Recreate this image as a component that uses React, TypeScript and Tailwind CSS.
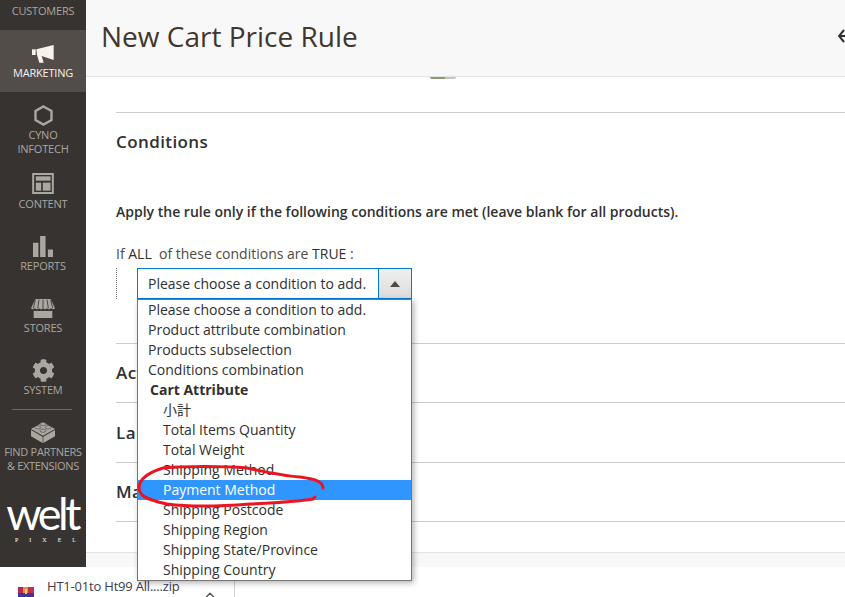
import React from "react";
import { FaCog } from "react-icons/fa";
import { ChevronUp } from "lucide-react";

const MegaphoneIcon = () => (
  <svg width="22" height="18" viewBox="0 0 66 54" fill="#f7f3eb">
    <rect x="0" y="13" width="11" height="17" />
    <path d="M13 13 65 0V45L29 33 35 53H22L15 30Z" />
  </svg>
);

const HexIcon = () => (
  <svg width="19" height="21" viewBox="0 0 19 21" fill="none" stroke="#aaa6a0" strokeWidth="2.4">
    <path d="M9.5 1.5 17.5 6V15L9.5 19.5 1.5 15V6Z" />
  </svg>
);

const LayoutIcon = () => (
  <svg width="22" height="21" viewBox="0 0 65 63" fill="#aaa6a0">
    <path fillRule="evenodd" d="M0 0H65V63H0ZM6 6V57H59V6Z" />
    <rect x="11" y="10" width="44" height="13" />
    <rect x="11" y="29" width="16" height="24" />
    <rect x="32" y="29" width="23" height="24" />
  </svg>
);

const BarsIcon = () => (
  <svg width="20" height="21" viewBox="0 0 59 62" fill="#aaa6a0">
    <rect x="0" y="20" width="16" height="42" />
    <rect x="21" y="0" width="16" height="62" />
    <rect x="44" y="40" width="15" height="22" />
  </svg>
);

const StoreIcon = () => (
  <svg width="24" height="19" viewBox="0 0 72 57" fill="#aaa6a0">
    <path d="M13 0H59L72 28Q66 34 60 28 54 34 48 28 42 34 36 28 30 34 24 28 18 34 12 28 6 34 0 28Z" />
    <path d="M24 2 20 28M36 2V28M48 2 52 28M13 2 7 28M59 2 65 28" stroke="#373330" strokeWidth="2.5" />
    <path d="M8 35Q12 37 18 35 24 37 30 35 36 37 42 35 48 37 54 35 60 37 64 35V57H8Z" />
  </svg>
);

const BrickIcon = () => (
  <svg width="24" height="22" viewBox="0 0 72 66" fill="#aaa6a0">
    <path d="M0 24 36 4 72 24 36 44Z" />
    <path d="M0 27 35 47V66L0 46Z" />
    <path d="M37 47 72 27V46L37 66Z" />
    <g stroke="#373330" strokeWidth="1.5">
      <ellipse cx="36" cy="9" rx="9" ry="5" />
      <ellipse cx="20" cy="19" rx="9" ry="5" />
      <ellipse cx="52" cy="19" rx="9" ry="5" />
      <ellipse cx="36" cy="29" rx="9" ry="5" />
    </g>
  </svg>
);

const ArchiveIcon = () => (
  <svg width="16" height="10" viewBox="0 0 16 10">
    <rect x="0" y="0" width="5" height="10" fill="#b32a5a" />
    <rect x="5" y="0" width="5" height="10" fill="#e8912d" />
    <rect x="10" y="0" width="6" height="10" fill="#c7304a" />
    <rect x="0" y="6" width="16" height="4" fill="#43339a" />
    <rect x="7" y="2" width="2" height="5" fill="#f0d060" />
  </svg>
);

function NavItem({
  icon,
  label,
  active,
  height,
  iconTop,
  labelTop,
}: {
  icon: React.ReactNode;
  label: string[];
  active?: boolean;
  height: string;
  iconTop: string;
  labelTop: string;
}) {
  return (
    <div className={`flex flex-col items-center ${height} ${active ? "bg-[#524d49] text-[#f7f3eb]" : "text-[#aaa6a0]"}`}>
      <div className={`flex h-[24px] items-center justify-center ${iconTop} ${labelTop}`}>{icon}</div>
      {label.map((line) => (
        <span key={line} className="text-[11px] leading-[14px] whitespace-nowrap tracking-[-0.2px]">
          {line}
        </span>
      ))}
    </div>
  );
}

function Sidebar() {
  return (
    <div className="flex w-[86px] shrink-0 flex-col bg-[#373330]">
      <div className="h-[30px] pt-[4px] text-center text-[11px] leading-[14px] tracking-[-0.2px] text-[#aaa6a0]">CUSTOMERS</div>
      <NavItem icon={<MegaphoneIcon />} label={["MARKETING"]} active height="h-[62px]" iconTop="mt-[12px]" labelTop="mb-0" />
      <NavItem icon={<HexIcon />} label={["CYNO", "INFOTECH"]} height="h-[68px]" iconTop="mt-[11px]" labelTop="mb-[1px]" />
      <NavItem icon={<LayoutIcon />} label={["CONTENT"]} height="h-[62px]" iconTop="mt-[11px]" labelTop="mb-[2px]" />
      <NavItem icon={<BarsIcon />} label={["REPORTS"]} height="h-[62px]" iconTop="mt-[12px]" labelTop="mb-[1px]" />
      <NavItem icon={<StoreIcon />} label={["STORES"]} height="h-[62px]" iconTop="mt-[12px]" labelTop="mb-[1px]" />
      <NavItem icon={<FaCog size={23} color="#aaa6a0" />} label={["SYSTEM"]} height="h-[62px]" iconTop="mt-[12px]" labelTop="mb-[1px]" />
      <div className="mx-[12px] mt-[1px] h-px w-[60px] bg-[#6f6a65]" />
      <div className="flex flex-col items-center text-[#aaa6a0]">
        <div className="mt-[10px] flex h-[24px] items-center justify-center">
          <BrickIcon />
        </div>
        <span className="mt-[1px] text-[11px] leading-[14px] whitespace-nowrap tracking-[-0.3px]">FIND PARTNERS</span>
        <span className="text-[11px] leading-[14px] whitespace-nowrap tracking-[-0.3px]">&amp; EXTENSIONS</span>
      </div>
      <div className="mt-[22px] flex flex-col items-center text-white">
        <span className="pr-[2px] font-['Lato',sans-serif] text-[45px] leading-[36px] tracking-[-3.5px]">welt</span>
        <span className="mt-[5px] pl-[16px] font-['Liberation_Serif',serif] text-[6px] leading-[8px] tracking-[11px]">PIXEL</span>
      </div>
    </div>
  );
}

const options = [
  { text: "Please choose a condition to add.", cls: "pl-[10px]" },
  { text: "Product attribute combination", cls: "pl-[10px]" },
  { text: "Products subselection", cls: "pl-[10px]" },
  { text: "Conditions combination", cls: "pl-[10px]" },
  { text: "Cart Attribute", cls: "pl-[12px] font-bold" },
  { text: "小計", cls: "pl-[25px]" },
  { text: "Total Items Quantity", cls: "pl-[25px]" },
  { text: "Total Weight", cls: "pl-[25px]" },
  { text: "Shipping Method", cls: "pl-[25px]" },
  { text: "Payment Method", cls: "pl-[25px] bg-[#2f96ff] text-white" },
  { text: "Shipping Postcode", cls: "pl-[25px]" },
  { text: "Shipping Region", cls: "pl-[25px]" },
  { text: "Shipping State/Province", cls: "pl-[25px]" },
  { text: "Shipping Country", cls: "pl-[25px]" },
];

function ConditionSelect() {
  return (
    <div className="relative ml-[20px] w-[275px]">
      <div className="flex h-[31px] w-[275px] border border-[#007bdb] bg-white">
        <div className="flex-1 pl-[10px] text-[14px] leading-[29px] text-[#303030]">Please choose a condition to add.</div>
        <div className="flex w-[33px] items-center justify-center border-l border-[#007bdb] bg-gradient-to-b from-[#f0f0f0] to-[#dcdcdc]">
          <div className="h-0 w-0 border-x-[5px] border-b-[6px] border-x-transparent border-b-[#514943]" />
        </div>
      </div>
      <div className="absolute top-[31px] left-0 z-10 w-[275px] border border-[#767676] bg-white shadow-[2px_2px_6px_rgba(0,0,0,0.3)]">
        {options.map((option) => (
          <div key={option.text} className={`h-[20px] text-[14px] leading-[20px] whitespace-nowrap text-[#303030] ${option.cls}`}>
            {option.text}
          </div>
        ))}
      </div>
    </div>
  );
}

function Section({ title, height }: { title: string; height: string }) {
  return (
    <div className={`flex items-center border-t border-[#cccccc] text-[17px] font-semibold tracking-[0.4px] text-[#303030] ${height}`}>{title}</div>
  );
}

function MainPanel() {
  return (
    <div className="flex min-w-0 flex-1 flex-col bg-white">
      <div className="flex h-[77px] shrink-0 items-center justify-between border-b border-[#e3e3e3] bg-[#f8f8f8] pb-[4px] pl-[15px]">
        <h1 className="text-[28px] leading-[36px] text-[#41362f]">New Cart Price Rule</h1>
        <svg width="7" height="14" viewBox="0 0 7 14" fill="none" stroke="#303030" strokeWidth="2">
          <path d="M6 1 1 7 6 13M1 7H7" />
        </svg>
      </div>
      <div className="ml-[344px] flex h-[2px] w-[26px] shrink-0 overflow-hidden rounded-b-full">
        <div className="w-[15px] bg-[#8a9a70]" />
        <div className="flex-1 bg-[#c4c4c4]" />
      </div>
      <div className="ml-[30px] flex-1">
        <div className="mt-[33px] h-[231px] border-t border-[#cccccc]">
          <h2 className="mt-[17px] text-[17px] leading-[24px] font-semibold tracking-[0.4px] text-[#303030]">Conditions</h2>
          <p className="mt-[48px] text-[14px] leading-[20px] font-semibold text-[#303030]">
            Apply the rule only if the following conditions are met (leave blank for all products).
          </p>
          <p className="mt-[22px] text-[14px] leading-[20px] whitespace-pre text-[#514943]">
            If <span className="text-[#303030]">ALL</span>  of these conditions are <span className="text-[#303030]">TRUE</span> :
          </p>
          <div className="mt-[4px] border-l border-dotted border-[#707070]">
            <ConditionSelect />
          </div>
        </div>
        <Section title="Actions" height="h-[59px]" />
        <Section title="Labels" height="h-[60px]" />
        <Section title="Manage Coupon Codes" height="h-[59px]" />
        <div className="h-[31px] border-t border-[#cccccc]" />
      </div>
      <div className="h-[15px] shrink-0 border-t border-[#e3e3e3] bg-[#f8f8f8]" />
    </div>
  );
}

function DownloadBar() {
  return (
    <div className="flex h-[30px] shrink-0 overflow-hidden bg-white">
      <div className="relative flex h-[30px] w-[235px] border-r border-[#cfcfcf] pl-[18px]">
        <div className="mt-[20px]">
          <ArchiveIcon />
        </div>
        <span className="mt-[9px] ml-[13px] text-[13px] leading-[20px] tracking-[-0.2px] whitespace-nowrap text-[#3c3c4e]">HT1-01to Ht99 All....zip</span>
        <ChevronUp className="mt-[21px] ml-[23px] shrink-0 text-[#555555]" size={14} strokeWidth={2.5} />
      </div>
    </div>
  );
}

export default function App() {
  return (
    <div className="relative flex h-[597px] w-[845px] flex-col overflow-hidden bg-white font-['Open_Sans','Noto_Sans_CJK_JP',sans-serif]">
      <div className="flex h-[567px] shrink-0">
        <Sidebar />
        <MainPanel />
      </div>
      <DownloadBar />
      {/* red pen circle around the highlighted option */}
      <svg className="pointer-events-none absolute top-0 left-0 z-20" width="845" height="597" fill="none">
        <path
          d="M323 488C323 481 314 479 300 477 285 476 265 472 247 468 225 466 185 466 163 468 150 472 140 478 139 487 139 495 144 499 167 504 190 507 225 506 250 504 270 503 295 502 313 499L315 497"
          stroke="#ea1520"
          strokeWidth="3"
          strokeLinecap="round"
        />
      </svg>
    </div>
  );
}
